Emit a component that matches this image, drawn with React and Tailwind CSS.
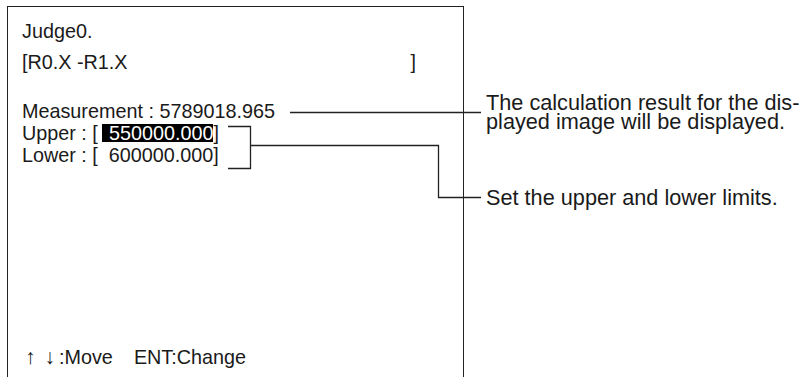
import React from "react";

export default function App() {
  return (
    <div
      className="relative w-[807px] h-[377px] overflow-hidden bg-white text-[#1a1a1a]"
      style={{ fontFamily: '"Liberation Sans", Arial, sans-serif' }}
    >
      <div className="flex h-full">
        <div className="ml-[7px] mt-[6px] w-[457px] border-l-[1.5px] border-t-[1.5px] border-r-[1.5px] border-[#222] flex flex-col pl-[14px] pt-[13px] pb-[9px] text-[19.8px] whitespace-pre">
          <div className="h-[22px] leading-[22px]">Judge0.</div>
          <div className="mt-[9px] h-[22px] leading-[22px] flex w-[394px] justify-between">
            <span>[R0.X -R1.X</span>
            <span>]</span>
          </div>
          <div className="mt-[28px] h-[21px] leading-[21px]">Measurement : 5789018.965</div>
          <div className="h-[22px] leading-[22px] flex items-center">
            <span>Upper : [</span>
            <span className="ml-[4px] bg-black text-white pl-[7px] h-[18px] leading-[18px]">550000.000</span>
            <span>]</span>
          </div>
          <div className="h-[22px] leading-[22px]">Lower : [  600000.000]</div>
          <div className="flex-1" />
          <div className="h-[22px] leading-[22px] flex items-center">
            <span className="ml-[3px] text-[21px]">↑</span>
            <span className="ml-[9px] text-[21px]">↓</span>
            <span className="ml-[4px]">:Move</span>
            <span className="ml-[21px]">ENT:Change</span>
          </div>
        </div>
        <div className="ml-[22px] pt-[93px] flex flex-col text-[21.7px]">
          <div className="leading-[19px]">
            <div>The calculation result for the dis-</div>
            <div>played image will be displayed.</div>
          </div>
          <div className="mt-[57px] leading-[19px]">Set the upper and lower limits.</div>
        </div>
      </div>
      <svg className="absolute inset-0 pointer-events-none" width="807" height="377">
        <g fill="none" stroke="#222" strokeWidth="1.3">
          <path d="M290 112.5 H481" />
          <path d="M228 126.5 H250.5 V168.5 H228" />
          <path d="M250.5 145.5 H438.5 V197.5 H481" />
        </g>
      </svg>
    </div>
  );
}
